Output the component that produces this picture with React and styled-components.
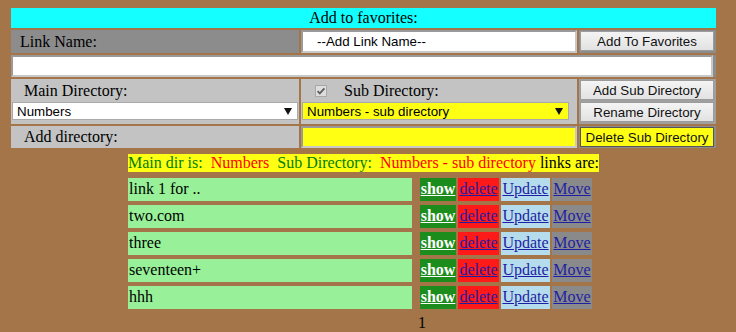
import styled, { createGlobalStyle } from "styled-components";

const GlobalStyle = createGlobalStyle`
  body {
    margin: 0;
    background: #a37549;
    font-family: "Liberation Serif", "Times New Roman", serif;
    font-size: 16px;
    color: #000;
  }
`;

const links = ["link 1 for ..", "two.com", "three", "seventeen+", "hhh"];

const Page = styled.div`
  width: 705px;
  padding: 8px 0 0 11px;
`;

const FormGrid = styled.div`
  display: grid;
  grid-template-columns: 288px 276px 137px;
  grid-template-rows: 20px 23px 22px 45px 22px;
  gap: 2px;
`;

const Banner = styled.div`
  grid-column: 1 / -1;
  background: #14ffff;
  text-align: center;
  line-height: 20px;
`;

const Cell = styled.div`
  grid-column: ${(p) => (p.$span ? "1 / -1" : "auto")};
  background: ${(p) => p.$bg || "#c3c3c3"};
  display: flex;
  flex-direction: column;
  justify-content: ${(p) => (p.$center ? "center" : "flex-start")};
  padding: ${(p) => p.$pad || "0"};
  box-sizing: border-box;
`;

const Label = styled.div`
  padding-left: ${(p) => p.$indent || 13}px;
  line-height: ${(p) => p.$lh || "normal"};
`;

const TextInput = styled.input`
  box-sizing: border-box;
  width: ${(p) => p.$w || "100%"};
  height: ${(p) => p.$h || 23}px;
  margin: 0;
  border: 2px solid;
  border-color: #9a9a9a #c8c8c8 #c8c8c8 #9a9a9a;
  background: ${(p) => p.$bg || "#fff"};
  font-family: "Liberation Sans", Arial, sans-serif;
  font-size: 13.33px;
  color: #000;
  padding: 0 0 0 ${(p) => p.$indent || 2}px;
  outline: none;
`;

const Button = styled.button`
  box-sizing: border-box;
  width: 134px;
  height: 20px;
  margin: ${(p) => p.$m || "0"};
  padding: 0;
  border: 1px solid #9c9c9c;
  background: ${(p) => p.$bg || "linear-gradient(#f4f4f4, #e2e2e2)"};
  font-family: "Liberation Sans", Arial, sans-serif;
  font-size: 13.33px;
  color: #111;
  text-align: center;
`;

const SelectBox = styled.div`
  box-sizing: border-box;
  display: flex;
  align-items: center;
  justify-content: space-between;
  width: ${(p) => p.$w}px;
  height: 18px;
  margin-left: 1px;
  padding: 0 5px 0 4px;
  border: 1px solid #a9a9a9;
  background: ${(p) => p.$bg || "#fff"};
  font-family: "Liberation Sans", Arial, sans-serif;
  font-size: 13.33px;
  color: #000;
`;

const CheckRow = styled.div`
  display: flex;
  align-items: center;
  gap: 17px;
  height: 20px;
  padding-left: 14px;
`;

const InfoLine = styled.div`
  margin-top: 6px;
  text-align: center;
`;

const InfoBox = styled.span`
  display: inline-block;
  height: 18px;
  line-height: 18px;
  background: #ffff14;
  white-space: pre;
`;

const Word = styled.span`
  color: ${(p) => p.$c};
`;

const LinkList = styled.div`
  display: flex;
  flex-direction: column;
  gap: 4px;
  margin: 6px 0 0 117px;
`;

const LinkRow = styled.div`
  display: flex;
  height: 23px;
  gap: 2px;
`;

const LinkName = styled.div`
  width: 284px;
  margin-right: 6px;
  padding-left: 1px;
  box-sizing: border-box;
  background: #98f198;
  line-height: 22px;
`;

const Action = styled.a`
  display: block;
  width: ${(p) => p.$w}px;
  background: ${(p) => p.$bg};
  color: ${(p) => p.$c || "#1f1fa3"};
  font-weight: ${(p) => (p.$bold ? "bold" : "normal")};
  text-align: center;
  text-decoration: underline;
  line-height: 22px;
  cursor: pointer;
`;

const Pager = styled.div`
  margin: 5px 0 0 407px;
`;

const Arrow = () => (
  <svg width="8" height="7" viewBox="0 0 8 7">
    <polygon points="0,0 8,0 4,7" fill="#111" />
  </svg>
);

const Check = () => (
  <svg width="12" height="12" viewBox="0 0 12 12">
    <rect x="0.5" y="0.5" width="11" height="11" fill="#dedede" stroke="#a8a8a8" />
    <path d="M2.6 6.2 L4.8 8.4 L9.4 3.4" fill="none" stroke="#5c5c5c" strokeWidth="1.8" />
  </svg>
);

export default function App() {
  return (
    <>
      <GlobalStyle />
      <Page>
        <FormGrid>
          <Banner>Add to favorites:</Banner>

          <Cell $bg="#8c8c8c" $center>
            <Label $indent={9}>Link Name:</Label>
          </Cell>
          <Cell $bg="#8c8c8c">
            <TextInput $indent={14} defaultValue="--Add Link Name--" />
          </Cell>
          <Cell $bg="#8c8c8c" $pad="1px">
            <Button>Add To Favorites</Button>
          </Cell>

          <Cell $span $bg="#8c8c8c">
            <TextInput $w="702px" $h={22} />
          </Cell>

          <Cell $pad="2px 0 0 0">
            <Label $lh="20px">Main Directory:</Label>
            <SelectBox $w={286} style={{ marginTop: 1 }}>
              <span>Numbers</span>
              <Arrow />
            </SelectBox>
          </Cell>
          <Cell $pad="2px 0 0 0">
            <CheckRow>
              <Check />
              <span>Sub Directory:</span>
            </CheckRow>
            <SelectBox $w={267} $bg="#ffff14" style={{ marginTop: 1 }}>
              <span>Numbers - sub directory</span>
              <Arrow />
            </SelectBox>
          </Cell>
          <Cell $bg="#a0a0a0" $pad="1px">
            <Button $m="0 0 2px 0">Add Sub Directory</Button>
            <Button>Rename Directory</Button>
          </Cell>

          <Cell $center>
            <Label>Add directory:</Label>
          </Cell>
          <Cell $bg="#a0a0a0">
            <TextInput $h={22} $bg="#ffff14" />
          </Cell>
          <Cell $bg="#8c8c8c" $pad="1px">
            <Button $bg="#ffff14" style={{ borderColor: "#555" }}>
              Delete Sub Directory
            </Button>
          </Cell>
        </FormGrid>

        <InfoLine>
          <InfoBox>
            <Word $c="#008000">Main dir is:{"\u00a0 "}</Word>
            <Word $c="#ff0000">Numbers{"\u00a0 "}</Word>
            <Word $c="#008000">Sub Directory:{"\u00a0 "}</Word>
            <Word $c="#ff0000">Numbers - sub directory</Word>
            <Word $c="#000"> links are:</Word>
          </InfoBox>
        </InfoLine>

        <LinkList>
          {links.map((name) => (
            <LinkRow key={name}>
              <LinkName>{name}</LinkName>
              <Action $w={36} $bg="#1c8c1c" $c="#fff" $bold>
                show
              </Action>
              <Action $w={41} $bg="#ff1a1a">
                delete
              </Action>
              <Action $w={49} $bg="#b4dcec">
                Update
              </Action>
              <Action $w={40} $bg="#8a8a8a">
                Move
              </Action>
            </LinkRow>
          ))}
        </LinkList>

        <Pager>1</Pager>
      </Page>
    </>
  );
}
